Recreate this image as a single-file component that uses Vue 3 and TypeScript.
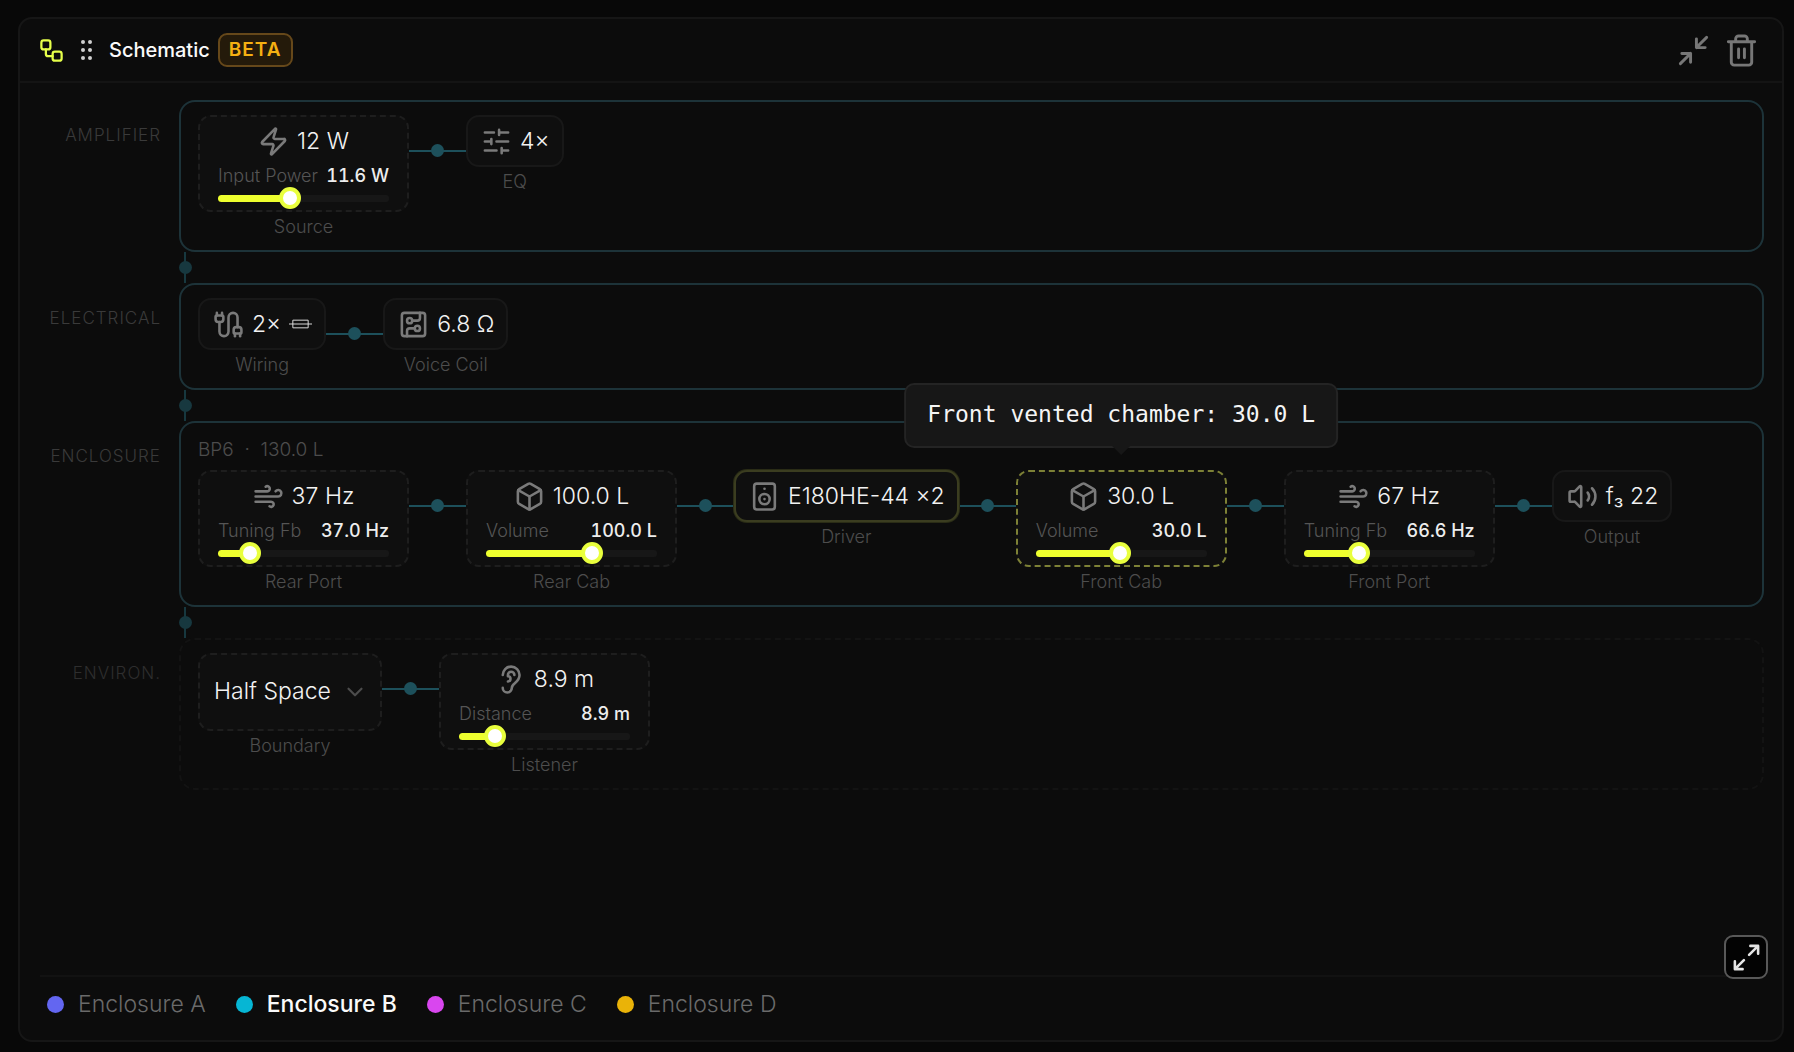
<script setup lang="ts">
import { ref, reactive } from 'vue'

type IconName = 'zap' | 'sliders' | 'cable' | 'circuit' | 'wind' | 'box' | 'speaker' | 'volume' | 'ear'

interface Control {
  label: string
  value: string
  percent: number
}

interface SchematicNode {
  id: string
  caption: string
  icon?: IconName
  text?: string
  resistor?: boolean
  control?: Control
  options?: string[]
  state?: 'selected' | 'hovered'
  tooltip?: string
}

interface Stage {
  id: string
  label: string
  summary?: string
  dashed?: boolean
  nodes: SchematicNode[]
}

const icons: Record<IconName, string> = {
  zap: '<path d="M4 14a1 1 0 0 1-.78-1.63l9.9-10.2a.5.5 0 0 1 .86.46l-1.92 6.02A1 1 0 0 0 13 10h7a1 1 0 0 1 .78 1.63l-9.9 10.2a.5.5 0 0 1-.86-.46l1.92-6.02A1 1 0 0 0 11 14z"/>',
  sliders:
    '<path d="M21 5h-7M10 5H3M21 12h-9M8 12H3M21 19h-5M12 19H3M14 3v4M8 10v4M16 17v4"/>',
  cable:
    '<path d="M17 19a1 1 0 0 1-1-1v-2a2 2 0 0 1 2-2h2a2 2 0 0 1 2 2v2a1 1 0 0 1-1 1z"/><path d="M17 21v-2"/><path d="M19 14V6.5a1 1 0 0 0-7 0v11a1 1 0 0 1-7 0V10"/><path d="M21 21v-2"/><path d="M3 5V3"/><path d="M4 10a2 2 0 0 1-2-2V6a1 1 0 0 1 1-1h4a1 1 0 0 1 1 1v2a2 2 0 0 1-2 2z"/><path d="M7 5V3"/>',
  circuit:
    '<rect width="18" height="18" x="3" y="3" rx="2"/><path d="M11 9h4a2 2 0 0 0 2-2V3"/><circle cx="9" cy="9" r="2"/><path d="M7 21v-4a2 2 0 0 1 2-2h4"/><circle cx="15" cy="15" r="2"/>',
  wind: '<path d="M12.8 19.6A2 2 0 1 0 14 16H2"/><path d="M17.5 8a2.5 2.5 0 1 1 2 4H2"/><path d="M9.8 4.4A2 2 0 1 1 11 8H2"/>',
  box: '<path d="M21 8a2 2 0 0 0-1-1.73l-7-4a2 2 0 0 0-2 0l-7 4A2 2 0 0 0 3 8v8a2 2 0 0 0 1 1.73l7 4a2 2 0 0 0 2 0l7-4A2 2 0 0 0 21 16Z"/><path d="m3.3 7 8.7 5 8.7-5"/><path d="M12 22V12"/>',
  speaker:
    '<rect width="16" height="20" x="4" y="2" rx="2"/><path d="M12 6h.01"/><circle cx="12" cy="14" r="4"/><path d="M12 14h.01"/>',
  volume:
    '<path d="M11 4.702a.705.705 0 0 0-1.203-.498L6.413 7.587A1.4 1.4 0 0 1 5.416 8H3a1 1 0 0 0-1 1v6a1 1 0 0 0 1 1h2.416a1.4 1.4 0 0 1 .997.413l3.383 3.384A.705.705 0 0 0 11 19.298z"/><path d="M16 9a5 5 0 0 1 0 6"/><path d="M19.364 18.364a9 9 0 0 0 0-12.728"/>',
  ear: '<path d="M6 8.5a6.5 6.5 0 1 1 13 0c0 6-6 6-6 10a3.5 3.5 0 1 1-7 0"/><path d="M15 8.5a2.5 2.5 0 0 0-5 0v1a2 2 0 1 1 0 4"/>',
}

const stages = reactive<Stage[]>([
  {
    id: 'amplifier',
    label: 'AMPLIFIER',
    nodes: [
      { id: 'source', caption: 'Source', icon: 'zap', text: '12 W', control: { label: 'Input Power', value: '11.6 W', percent: 41 } },
      { id: 'eq', caption: 'EQ', icon: 'sliders', text: '4×' },
    ],
  },
  {
    id: 'electrical',
    label: 'ELECTRICAL',
    nodes: [
      { id: 'wiring', caption: 'Wiring', icon: 'cable', text: '2×', resistor: true },
      { id: 'coil', caption: 'Voice Coil', icon: 'circuit', text: '6.8 Ω' },
    ],
  },
  {
    id: 'enclosure',
    label: 'ENCLOSURE',
    summary: 'BP6 \u00a0·\u00a0 130.0 L',
    nodes: [
      { id: 'rear-port', caption: 'Rear Port', icon: 'wind', text: '37 Hz', control: { label: 'Tuning Fb', value: '37.0 Hz', percent: 14 } },
      { id: 'rear-cab', caption: 'Rear Cab', icon: 'box', text: '100.0 L', control: { label: 'Volume', value: '100.0 L', percent: 64 } },
      { id: 'driver', caption: 'Driver', icon: 'speaker', text: 'E180HE-44 ×2', state: 'selected' },
      {
        id: 'front-cab',
        caption: 'Front Cab',
        icon: 'box',
        text: '30.0 L',
        control: { label: 'Volume', value: '30.0 L', percent: 49 },
        state: 'hovered',
        tooltip: 'Front vented chamber: 30.0 L',
      },
      { id: 'front-port', caption: 'Front Port', icon: 'wind', text: '67 Hz', control: { label: 'Tuning Fb', value: '66.6 Hz', percent: 30 } },
      { id: 'output', caption: 'Output', icon: 'volume', text: 'f₃ 22' },
    ],
  },
  {
    id: 'environment',
    label: 'ENVIRON.',
    dashed: true,
    nodes: [
      { id: 'boundary', caption: 'Boundary', options: ['Half Space', 'Full Space', 'Quarter Space'] },
      { id: 'listener', caption: 'Listener', icon: 'ear', text: '8.9 m', control: { label: 'Distance', value: '8.9 m', percent: 17 } },
    ],
  },
])

const boundary = ref('Half Space')

const enclosures = [
  { name: 'Enclosure A', color: '#6366f1' },
  { name: 'Enclosure B', color: '#06b6d4' },
  { name: 'Enclosure C', color: '#d946ef' },
  { name: 'Enclosure D', color: '#eab308' },
]
const activeEnclosure = ref('Enclosure B')
</script>

<template>
  <main class="page">
    <section class="panel">
      <header class="head">
        <svg class="logo icon" viewBox="0 0 24 24" aria-hidden="true">
          <rect x="3" y="3" width="8" height="8" rx="2" />
          <path d="M7 11v4a2 2 0 0 0 2 2h4" />
          <rect x="13" y="13" width="8" height="8" rx="2" />
        </svg>
        <svg class="grip" viewBox="0 0 12 20" aria-hidden="true">
          <circle cx="2" cy="2" r="2" /><circle cx="9" cy="2" r="2" />
          <circle cx="2" cy="10" r="2" /><circle cx="9" cy="10" r="2" />
          <circle cx="2" cy="18" r="2" /><circle cx="9" cy="18" r="2" />
        </svg>
        <h1 class="title">Schematic</h1>
        <span class="badge">BETA</span>
        <div class="actions">
          <button type="button" class="ghost" aria-label="Collapse panel">
            <svg class="icon" viewBox="0 0 24 24"><path d="M4 14h6v6M20 10h-6V4M14 10l7-7M3 21l7-7" /></svg>
          </button>
          <button type="button" class="ghost" aria-label="Remove panel">
            <svg class="icon" viewBox="0 0 24 24">
              <path d="M3 6h18M19 6v14a2 2 0 0 1-2 2H7a2 2 0 0 1-2-2V6M8 6V4a2 2 0 0 1 2-2h4a2 2 0 0 1 2 2v2M10 11v6M14 11v6" />
            </svg>
          </button>
        </div>
      </header>

      <div class="body">
        <template v-for="(stage, s) in stages" :key="stage.id">
          <div v-if="s > 0" class="bridge"><i class="dot"></i></div>
          <div class="stage">
            <h2 class="stage-label" :class="{ faint: stage.dashed }">{{ stage.label }}</h2>
            <div class="stage-box" :class="{ dashed: stage.dashed }">
              <p v-if="stage.summary" class="summary">{{ stage.summary }}</p>
              <div class="nodes">
                <template v-for="(node, n) in stage.nodes" :key="node.id">
                  <div v-if="n > 0" class="link"><i class="dot"></i></div>
                  <div class="node-col">
                    <div v-if="node.options" class="node choice">
                      <select :id="node.id" v-model="boundary" class="select" :aria-label="node.caption">
                        <option v-for="option in node.options" :key="option">{{ option }}</option>
                      </select>
                      <svg class="chevron icon" viewBox="0 0 24 24" aria-hidden="true"><path d="m6 9 6 6 6-6" /></svg>
                    </div>
                    <div v-else class="node" :class="[{ tunable: node.control }, node.state]">
                      <div class="main">
                        <svg class="icon glyph" viewBox="0 0 24 24" aria-hidden="true" v-html="icons[node.icon!]"></svg>
                        <span>{{ node.text }}</span>
                        <svg v-if="node.resistor" class="resistor" viewBox="0 0 24 10" aria-label="Series">
                          <path d="M0 5h24M4 1h16v8H4z" />
                        </svg>
                      </div>
                      <template v-if="node.control">
                        <div class="readout">
                          <label :for="node.id">{{ node.control.label }}</label>
                          <output :for="node.id">{{ node.control.value }}</output>
                        </div>
                        <input
                          :id="node.id"
                          v-model.number="node.control.percent"
                          class="slider"
                          type="range"
                          min="0"
                          max="100"
                          :style="{ '--fill': node.control.percent + '%' }"
                        />
                      </template>
                      <div v-if="node.tooltip" class="tooltip" role="tooltip">{{ node.tooltip }}</div>
                    </div>
                    <span class="caption">{{ node.caption }}</span>
                  </div>
                </template>
              </div>
            </div>
          </div>
        </template>
      </div>

      <footer class="legend">
        <button
          v-for="item in enclosures"
          :key="item.name"
          type="button"
          class="legend-item"
          :class="{ active: item.name === activeEnclosure }"
          @click="activeEnclosure = item.name"
        >
          <i class="swatch" :style="{ background: item.color }"></i>{{ item.name }}
        </button>
      </footer>

      <button type="button" class="expand" aria-label="Expand schematic">
        <svg class="icon" viewBox="0 0 24 24"><path d="M15 3h6v6M9 21H3v-6M21 3l-7 7M3 21l7-7" /></svg>
      </button>
    </section>
  </main>
</template>

<style>
body {
  margin: 0;
  background: #080808;
}
</style>

<style scoped>
* {
  box-sizing: border-box;
}

.page {
  display: flex;
  min-height: 100vh;
  padding: 17px 10px 10px 18px;
  background: #080808;
  color: #f2f2f2;
  font-family: Inter, 'Liberation Sans', sans-serif;
  font-size: 23px;
  font-weight: 300;
}

.panel {
  position: relative;
  display: flex;
  flex: 1;
  flex-direction: column;
  min-width: 0;
  border: 2px solid #161616;
  border-radius: 14px;
  background: #0c0c0c;
}

.icon {
  display: block;
  flex: none;
  fill: none;
  stroke: currentColor;
  stroke-width: 2;
  stroke-linecap: round;
  stroke-linejoin: round;
}

button {
  padding: 0;
  border: 0;
  background: none;
  color: inherit;
  font: inherit;
  cursor: pointer;
}

.head {
  display: flex;
  align-items: center;
  height: 64px;
  padding: 0 23px 0 18px;
  border-bottom: 2px solid #141414;
}

.logo {
  width: 27px;
  height: 27px;
  color: #e6ff4a;
}

.grip {
  width: 12px;
  height: 20px;
  margin: 0 16px;
  fill: #cfcfcf;
}

.title {
  margin: 0;
  font-size: 20px;
  font-weight: 500;
  line-height: 28px;
  color: #fafafa;
}

.badge {
  margin-left: 8px;
  padding: 0 9px;
  border: 2px solid #66481a;
  border-radius: 9px;
  background: #241a0a;
  color: #f5b012;
  font-size: 19px;
  font-weight: 600;
  line-height: 30px;
  letter-spacing: 1px;
}

.actions {
  display: flex;
  gap: 13px;
  margin-left: auto;
  color: #777;
}

.actions .icon {
  width: 35px;
  height: 35px;
}

.body {
  flex: 1;
  padding: 17px 18px 20px 20px;
}

.stage {
  display: grid;
  grid-template-columns: 121px 1fr;
  column-gap: 18px;
}

.stage-label {
  margin: 24px 0 0;
  color: #3a3a3a;
  font-size: 17px;
  font-weight: 300;
  line-height: 22px;
  letter-spacing: 1px;
  text-align: right;
}

.stage-label.faint {
  color: #2e2e2e;
}

.stage-box {
  min-width: 0;
  padding: 13px 17px 12px;
  border: 2px solid #1d3339;
  border-radius: 16px;
}

.stage-box.dashed {
  border: 2px dashed #131313;
}

.summary {
  margin: 0 0 6px;
  color: #4c4c4c;
  font-size: 19px;
  line-height: 28px;
}

.dot {
  width: 13px;
  height: 13px;
  border-radius: 50%;
  background: currentColor;
}

.bridge {
  display: flex;
  align-items: center;
  justify-content: center;
  width: 12px;
  height: 31px;
  margin-left: 139px;
  color: #17383f;
  background: linear-gradient(currentColor, currentColor) center / 2px 100% no-repeat;
}

.bridge .dot {
  flex: none;
}

.nodes {
  display: flex;
  align-items: flex-start;
}

.link {
  display: flex;
  align-items: center;
  justify-content: center;
  flex: 0 0 57px;
  height: 13px;
  margin-top: 29px;
  color: #1d505b;
  background: linear-gradient(currentColor, currentColor) center / 100% 2px no-repeat;
}

.node-col {
  display: flex;
  flex-direction: column;
  align-items: center;
}

.node {
  position: relative;
  padding: 9px 12px 9px 13px;
  border: 2px solid #181818;
  border-radius: 13px;
  background: #0f0f0f;
}

.node.tunable {
  width: 211px;
  padding: 9px 18px 1px;
  border-style: dashed;
  border-color: #1e1e1e;
}

.node.selected {
  border-color: #3b3d20;
  box-shadow: 0 0 0 1px #2a2c16;
}

.node.hovered {
  border-color: #7d8136;
}

.main {
  display: flex;
  align-items: center;
  justify-content: center;
  gap: 8px;
  height: 30px;
  line-height: 30px;
  white-space: nowrap;
}

.glyph {
  width: 31px;
  height: 31px;
  color: #7a7a7a;
}

.resistor {
  width: 23px;
  height: 10px;
  fill: none;
  stroke: #e0e0e0;
  stroke-width: 1;
}

.readout {
  display: flex;
  justify-content: space-between;
  margin-top: 9px;
  font-size: 18px;
  line-height: 22px;
  white-space: nowrap;
}

.readout label {
  color: #555;
}

.readout output {
  color: #ededed;
  font-weight: 500;
  font-variant-numeric: tabular-nums;
}

.slider {
  display: block;
  width: 100%;
  height: 22px;
  margin: 0;
  appearance: none;
  background: none;
}

.slider::-webkit-slider-runnable-track {
  height: 7px;
  border-radius: 4px;
  background: linear-gradient(to right, #eeff2e var(--fill), #171717 var(--fill));
}

.slider::-webkit-slider-thumb {
  width: 22px;
  height: 22px;
  margin-top: -8px;
  appearance: none;
  border: 4px solid #e9ff3d;
  border-radius: 50%;
  background: #fff;
}

.caption {
  margin-top: 4px;
  color: #4d4d4d;
  font-size: 18px;
  line-height: 22px;
}

.choice {
  display: flex;
  align-items: center;
  padding: 0;
  border: 2px dashed #1e1e1e;
}

.select {
  width: 180px;
  height: 74px;
  padding: 0 0 2px 14px;
  border: 0;
  appearance: none;
  background: none;
  color: #f2f2f2;
  font: inherit;
}

.chevron {
  position: absolute;
  right: 12px;
  width: 26px;
  height: 26px;
  color: #4c4c4c;
  pointer-events: none;
}

.tooltip {
  position: absolute;
  bottom: calc(100% + 24px);
  left: 50%;
  z-index: 2;
  padding: 0 21px 3px;
  border: 2px solid #242424;
  border-radius: 10px;
  background: #171717;
  color: #f5f5f5;
  font-family: 'DejaVu Sans Mono', monospace;
  font-size: 23px;
  font-weight: 400;
  line-height: 58px;
  white-space: nowrap;
  transform: translateX(-50%);
}

.tooltip::after {
  content: '';
  position: absolute;
  top: 100%;
  left: 50%;
  border: 9px solid transparent;
  border-top-color: #171717;
  border-bottom: 0;
  transform: translateX(-50%);
}

.legend {
  display: flex;
  gap: 30px;
  margin: 0 18px 0 20px;
  padding: 13px 7px 22px;
  border-top: 2px solid #121212;
}

.legend-item {
  display: flex;
  align-items: center;
  gap: 14px;
  color: #6a6a6a;
  line-height: 28px;
}

.legend-item.active {
  color: #fafafa;
  font-weight: 500;
}

.swatch {
  width: 17px;
  height: 17px;
  border-radius: 50%;
}

.expand {
  position: absolute;
  right: 14px;
  bottom: 61px;
  display: grid;
  place-items: center;
  width: 44px;
  height: 44px;
  border: 2px solid #585858;
  border-radius: 9px;
  background: #030303;
  color: #e6e6e6;
}

.expand .icon {
  width: 31px;
  height: 31px;
}
</style>
